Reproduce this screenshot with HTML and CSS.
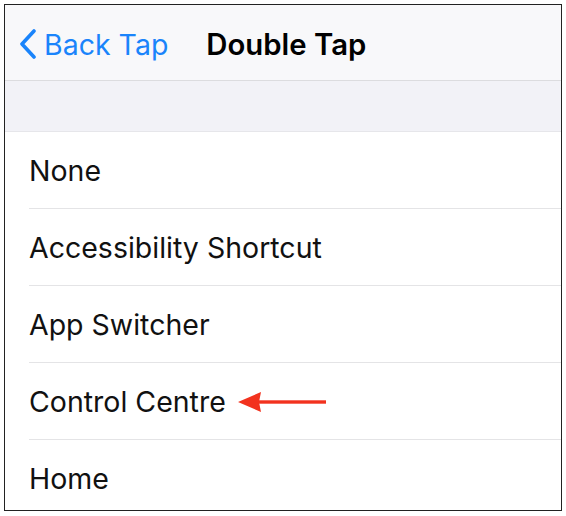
FILE: index.html
```html
<!DOCTYPE html>
<html>
<head>
<meta charset="utf-8">
<link rel="stylesheet" href="styles.css">
</head>
<body>
<div class="frame">
  <div class="nav">
    <div class="back">
      <svg class="chev" width="20" height="30" viewBox="0 0 20 30"><path d="M16 2 L4 15 L16 28" fill="none" stroke="#1a84fb" stroke-width="3.6" stroke-linecap="round" stroke-linejoin="round"/></svg>
      <span class="back-text">Back Tap</span>
    </div>
    <div class="title">Double Tap</div>
  </div>
  <div class="band"></div>
  <div class="list">
    <div class="row"><span>None</span></div>
    <div class="row"><span>Accessibility Shortcut</span></div>
    <div class="row"><span>App Switcher</span></div>
    <div class="row"><span>Control Centre</span>
      <svg class="arrow" width="90" height="24" viewBox="0 0 90 24"><path d="M0 12 L23 2 L21 12 L23 22 Z" fill="#f2321e"/><rect x="18" y="10.3" width="70" height="3.4" fill="#f2321e"/></svg>
    </div>
    <div class="row last"><span>Home</span></div>
  </div>
</div>
</body>
</html>
```
FILE: styles.css
```css
html, body { margin: 0; padding: 0; background: #fff; }
body { width: 566px; height: 516px; overflow: hidden; font-family: Inter, "Liberation Sans", Arial, sans-serif; }
.frame {
  position: relative;
  margin: 4px 0 0 4px;
  width: 556px;
  height: 505px;
  border: 1.5px solid #222;
  overflow: hidden;
  background: #fff;
}
.nav {
  height: 75px;
  background: #f8f8fa;
  border-bottom: 1px solid #dcdcdf;
  display: flex;
  align-items: center;
}
.back { display: flex; align-items: center; margin-left: 13px; margin-top: 4px; }
.chev { display: block; margin-top: -2px; }
.back-text { color: #1a84fb; font-size: 28.5px; margin-left: 6px; }
.title { font-size: 29.3px; font-weight: 600; color: #000; margin-left: 38px; margin-top: 4px; }
.band { height: 50px; background: #f2f2f7; border-bottom: 1px solid #e6e6ea; }
.list { padding-left: 24px; }
.row {
  height: 76px;
  border-bottom: 1px solid #e4e4e6;
  display: flex;
  align-items: center;
  font-size: 28.5px;
  color: #111;
}
.row.last { border-bottom: none; }
.arrow { margin-left: 12px; margin-top: 2px; }
```
